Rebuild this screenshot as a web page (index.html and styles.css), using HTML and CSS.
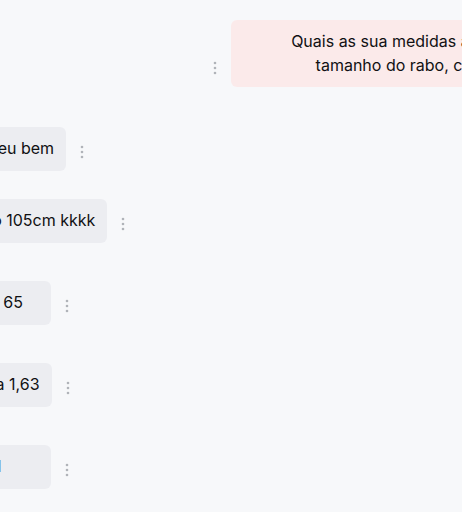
FILE: index.html
```html
<!DOCTYPE html>
<html lang="pt">
<head>
    <meta charset="UTF-8">
    <meta name="viewport" content="width=device-width, initial-scale=1.0">
    <title>Conversa</title>
    <link rel="stylesheet" href="styles.css">
</head>
<body>

<div class="chat">
    <div class="msg msg-user">
        <button class="more" aria-label="Mais opções">
            <svg width="4" height="14" viewBox="0 0 4 14"><circle cx="2" cy="2" r="1.3"/><circle cx="2" cy="7" r="1.3"/><circle cx="2" cy="12" r="1.3"/></svg>
        </button>
        <div class="bubble">Quais as sua medidas atuais?<br>tamanho do rabo, coxa</div>
    </div>

    <div class="msg msg-bot">
        <div class="bubble">Tô bem sim meu bem</div>
        <button class="more" aria-label="Mais opções">
            <svg width="4" height="14" viewBox="0 0 4 14"><circle cx="2" cy="2" r="1.3"/><circle cx="2" cy="7" r="1.3"/><circle cx="2" cy="12" r="1.3"/></svg>
        </button>
    </div>

    <div class="msg msg-bot msg-tight">
        <div class="bubble">Meu rabo, tipo 105cm kkkk</div>
        <button class="more" aria-label="Mais opções">
            <svg width="4" height="14" viewBox="0 0 4 14"><circle cx="2" cy="2" r="1.3"/><circle cx="2" cy="7" r="1.3"/><circle cx="2" cy="12" r="1.3"/></svg>
        </button>
    </div>

    <div class="msg msg-bot">
        <div class="bubble">Meu peso uns 65</div>
        <button class="more" aria-label="Mais opções">
            <svg width="4" height="14" viewBox="0 0 4 14"><circle cx="2" cy="2" r="1.3"/><circle cx="2" cy="7" r="1.3"/><circle cx="2" cy="12" r="1.3"/></svg>
        </button>
    </div>

    <div class="msg msg-bot">
        <div class="bubble">Minha estatura 1,63</div>
        <button class="more" aria-label="Mais opções">
            <svg width="4" height="14" viewBox="0 0 4 14"><circle cx="2" cy="2" r="1.3"/><circle cx="2" cy="7" r="1.3"/><circle cx="2" cy="12" r="1.3"/></svg>
        </button>
    </div>

    <div class="msg msg-bot">
        <div class="bubble">É, tudo natural</div>
        <button class="more" aria-label="Mais opções">
            <svg width="4" height="14" viewBox="0 0 4 14"><circle cx="2" cy="2" r="1.3"/><circle cx="2" cy="7" r="1.3"/><circle cx="2" cy="12" r="1.3"/></svg>
        </button>
    </div>
</div>

</body>
</html>
```

FILE: styles.css
```css
html, body {
    margin: 0;
    overflow: hidden;
}
body {
    font-family: Inter, "Noto Sans", Arial, sans-serif;
    font-size: 16px;
    color: #111113;
    background-color: #f7f8fa;
}
.chat {
    width: 700px;
    margin-left: -120px;
    padding-top: 20px;
}
.msg {
    display: flex;
    align-items: flex-end;
    gap: 8px;
    margin-top: 38.5px;
}
.msg:first-child {
    margin-top: 0;
}
.msg-user + .msg {
    margin-top: 40px;
}
.msg-tight {
    margin-top: 28.5px;
}
.msg-user {
    justify-content: flex-end;
    padding-right: 6px;
}
.bubble {
    padding: 10px 12px;
    line-height: 23.5px;
    border-radius: 6px;
    white-space: nowrap;
}
.msg-user .bubble {
    width: 319px;
    text-align: center;
    background-color: #fbeaea;
}
.msg-bot .bubble {
    min-width: 147px;
    background-color: #ecedf1;
}
.more {
    width: 16px;
    height: 20px;
    margin-bottom: 9px;
    padding: 0;
    border: none;
    background: none;
    display: flex;
    align-items: center;
    justify-content: center;
    cursor: pointer;
}
.more svg {
    fill: #b0b3b9;
}
```
